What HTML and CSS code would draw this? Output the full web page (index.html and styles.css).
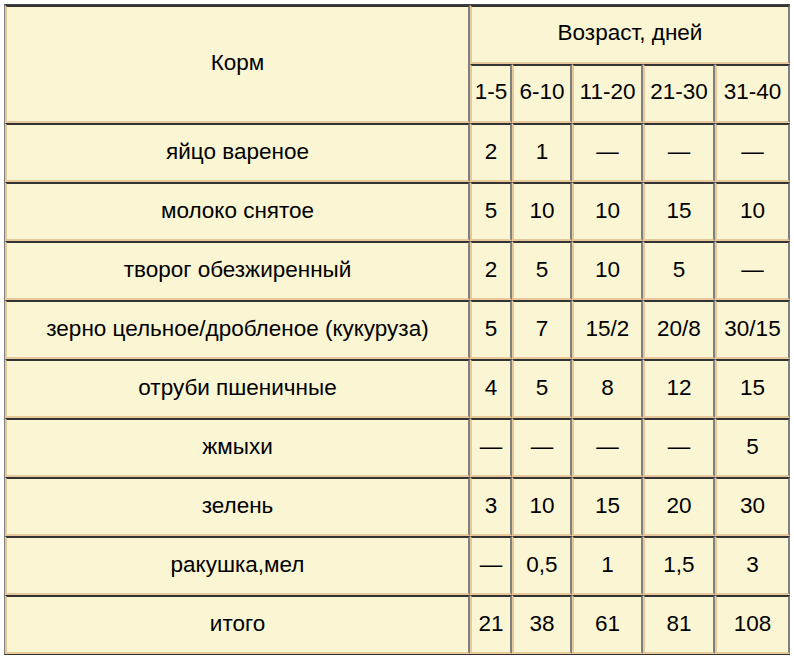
FILE: index.html
```html
<!DOCTYPE html>
<html lang="ru">
<head>
<meta charset="utf-8">
<title>Рацион</title>
<link rel="stylesheet" href="styles.css">
</head>
<body>
<table class="feed-table">
  <colgroup>
    <col class="c-feed">
    <col class="c-a">
    <col class="c-b">
    <col class="c-c">
    <col class="c-d">
    <col class="c-e">
  </colgroup>
  <thead>
    <tr>
      <th rowspan="2">Корм</th>
      <th colspan="5">Возраст, дней</th>
    </tr>
    <tr>
      <th>1-5</th>
      <th>6-10</th>
      <th>11-20</th>
      <th>21-30</th>
      <th>31-40</th>
    </tr>
  </thead>
  <tbody>
    <tr><td>яйцо вареное</td><td>2</td><td>1</td><td>—</td><td>—</td><td>—</td></tr>
    <tr><td>молоко снятое</td><td>5</td><td>10</td><td>10</td><td>15</td><td>10</td></tr>
    <tr><td>творог обезжиренный</td><td>2</td><td>5</td><td>10</td><td>5</td><td>—</td></tr>
    <tr><td>зерно цельное/дробленое (кукуруза)</td><td>5</td><td>7</td><td>15/2</td><td>20/8</td><td>30/15</td></tr>
    <tr><td>отруби пшеничные</td><td>4</td><td>5</td><td>8</td><td>12</td><td>15</td></tr>
    <tr><td>жмыхи</td><td>—</td><td>—</td><td>—</td><td>—</td><td>5</td></tr>
    <tr><td>зелень</td><td>3</td><td>10</td><td>15</td><td>20</td><td>30</td></tr>
    <tr><td>ракушка,мел</td><td>—</td><td>0,5</td><td>1</td><td>1,5</td><td>3</td></tr>
    <tr><td>итого</td><td>21</td><td>38</td><td>61</td><td>81</td><td>108</td></tr>
  </tbody>
</table>
</body>
</html>
```

FILE: styles.css
```css
html, body {
  background: #ffffff;
}
body {
  margin: 4px;
  font-family: "Liberation Sans", Arial, sans-serif;
  color: #000000;
}
.feed-table {
  border-collapse: separate;
  border-spacing: 0;
  table-layout: fixed;
  width: 787px;
  border-top: 1px solid #444444;
  border-left: 1px solid #808080;
  border-right: 1px solid #333333;
  border-bottom: 1px solid #333333;
}
.c-feed { width: 465px; }
.c-a { width: 42px; }
.c-b { width: 60px; }
.c-c { width: 71px; }
.c-d { width: 72px; }
.c-e { width: 75px; }

.feed-table th,
.feed-table td {
  background: #faf5d2;
  font-size: 22.5px;
  font-weight: normal;
  line-height: 27px;
  height: 27px;
  padding: 13px 2px 15px;
  text-align: center;
  vertical-align: middle;
  white-space: nowrap;
  border-top: 2px solid #333333;
  border-right: 2px solid #808080;
  border-bottom: 2px solid #e6c89a;
  border-left: 2px solid #e6c89a;
}
.feed-table th {
  padding-top: 12px;
  padding-bottom: 16px;
}
```
